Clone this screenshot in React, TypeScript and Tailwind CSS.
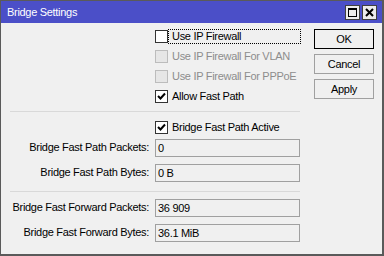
import { ReactNode } from 'react';

const font = { fontFamily: '"Liberation Sans", Arial, sans-serif' };

function CheckBox({ checked, disabled, label, focused }: { checked?: boolean; disabled?: boolean; label: string; focused?: boolean }) {
  return (
    <div className="flex items-center h-[20px] whitespace-nowrap">
      <div
        className={`w-[13px] h-[13px] shrink-0 border flex items-center justify-center ${
          disabled ? 'bg-[#e6e6e6] border-[#bcbcbc]' : 'bg-white border-[#333]'
        }`}
      >
        {checked && (
          <svg width="9" height="9" viewBox="0 0 9 9">
            <path d="M1 4 L3.5 6.5 L8 1.5" stroke="#000" strokeWidth="2" fill="none" />
          </svg>
        )}
      </div>
      <span
        className={`ml-[1px] pl-[3px] pr-[2px] text-[11px] tracking-[-0.3px] leading-[13px] ${
          disabled ? 'text-[#8d8d8d]' : 'text-black'
        } ${focused ? 'outline-1 outline-dotted outline-black w-[131px]' : ''}`}
      >
        {label}
      </span>
    </div>
  );
}

function Field({ label, value }: { label: string; value: string }) {
  return (
    <div className="flex items-center h-[25px] whitespace-nowrap text-[11px] tracking-[-0.3px]">
      <div className="w-[140px] text-right text-black pr-[1px]">{label}</div>
      <div className="ml-[5px] w-[145px] h-[18px] border border-[#a0a0a0] bg-[#f0f0f0] leading-[16px] px-[2px] text-black">
        {value}
      </div>
    </div>
  );
}

function Button({ children, primary }: { children: ReactNode; primary?: boolean }) {
  return (
    <div
      className={`w-[60px] h-[20px] flex items-center justify-center text-[11px] tracking-[-0.3px] text-black bg-[#f0f0f0] border ${
        primary ? 'border-black' : 'border-[#a0a0a0]'
      }`}
    >
      {children}
    </div>
  );
}

export default function App() {
  return (
    <div style={font} className="w-[384px] h-[256px] bg-[#f0f0f0] border-l border-t border-r-2 border-b-2 border-[#5a5a5a] flex flex-col">
      {/* Title bar */}
      <div className="h-[22px] bg-[#4b4fc8] flex items-center pl-[6px] pr-[5px]">
        <span className="text-white text-[11px] tracking-[-0.3px] flex-1 pt-[1px]">Bridge Settings</span>
        <div className="flex gap-[2px]">
          <div className="w-[15px] h-[15px] bg-[#ececec] border border-[#404040] flex items-center justify-center">
            <div className="w-[9px] h-[9px] border border-black border-t-2" />
          </div>
          <div className="w-[15px] h-[15px] bg-[#ececec] border border-[#404040] flex items-center justify-center">
            <svg width="9" height="9" viewBox="0 0 9 9">
              <path d="M1 1 L8 8 M8 1 L1 8" stroke="#000" strokeWidth="2" />
            </svg>
          </div>
        </div>
      </div>

      <div className="flex flex-1">
        {/* Left */}
        <div className="w-[290px] ml-[9px] pt-[3px]">
          <div className="pl-[145px]">
            <CheckBox label="Use IP Firewall" focused />
            <CheckBox label="Use IP Firewall For VLAN" disabled />
            <CheckBox label="Use IP Firewall For PPPoE" disabled />
            <CheckBox label="Allow Fast Path" checked />
          </div>
          <div className="h-px bg-[#d9d9d9] mt-[5px] mb-[5px]" />
          <div className="pl-[145px]">
            <CheckBox label="Bridge Fast Path Active" checked />
          </div>
          <div className="-mt-[2px]">
            <Field label="Bridge Fast Path Packets:" value="0" />
            <Field label="Bridge Fast Path Bytes:" value="0 B" />
          </div>
          <div className="h-px bg-[#d9d9d9] mt-[6px] mb-[3px]" />
          <Field label="Bridge Fast Forward Packets:" value="36 909" />
          <Field label="Bridge Fast Forward Bytes:" value="36.1 MiB" />
        </div>

        {/* Right */}
        <div className="ml-[14px] pt-[6px] flex flex-col gap-[5px]">
          <Button primary>OK</Button>
          <Button>Cancel</Button>
          <Button>Apply</Button>
        </div>
      </div>
    </div>
  );
}
